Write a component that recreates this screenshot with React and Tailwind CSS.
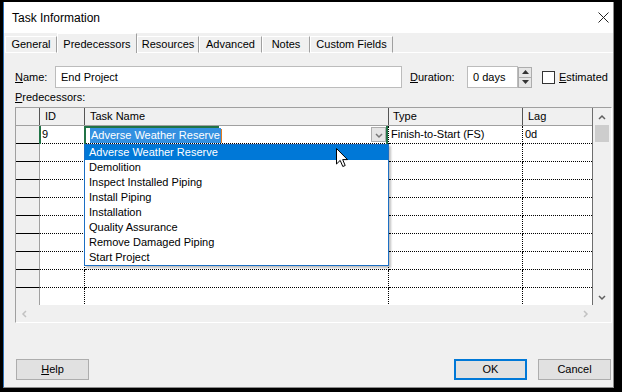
import React from 'react';

const tasks = [
  'Adverse Weather Reserve',
  'Demolition',
  'Inspect Installed Piping',
  'Install Piping',
  'Installation',
  'Quality Assurance',
  'Remove Damaged Piping',
  'Start Project',
];

const chevrons = {
  up: 'M1 6 L4 3 L7 6',
  down: 'M1 3 L4 6 L7 3',
  left: 'M5 1 L2 4 L5 7',
  right: 'M3 1 L6 4 L3 7',
};

const Chevron = ({ dir, color = '#606060' }) => (
  <svg width="8" height="8" viewBox="0 0 8 8">
    <path d={chevrons[dir]} fill="none" stroke={color} strokeWidth="1.5" />
  </svg>
);

const Tab = ({ label, width, active }) =>
  active ? (
    <div
      className="h-[20px] bg-[#f0f0f0] border-l border-t border-white border-r border-r-[#a0a0a0] flex items-start justify-center pt-[2px]"
      style={{ width }}
    >
      {label}
    </div>
  ) : (
    <div
      className="h-[17px] border-l border-t border-white border-r border-r-[#a0a0a0] border-b border-b-white flex items-center justify-center"
      style={{ width }}
    >
      {label}
    </div>
  );

const Button = ({ children, primary }) => (
  <div
    className={
      primary
        ? 'w-[73px] h-[21px] bg-[#e1e1e1] border-2 border-[#0078d7] flex items-center justify-center'
        : 'w-[73px] h-[21px] bg-[#e1e1e1] border border-[#adadad] flex items-center justify-center'
    }
  >
    {children}
  </div>
);

const cell = 'bg-white border-r border-b border-dotted border-black';

export default function App() {
  return (
    <div className="w-[622px] h-[392px] bg-black pl-[3px] pt-[2px] font-['Liberation_Sans',Arial,sans-serif] text-[11px] text-black">
      <div className="w-[611px] h-[386px] bg-[#f0f0f0] border-l border-[#2a6fb8] border-r border-r-[#8c8c8c] border-b border-b-[#8c8c8c] flex flex-col">
        {/* Title bar */}
        <div className="h-[31px] bg-white flex items-center justify-between pl-[8px] pr-[4px] text-[12px]">
          <span>Task Information</span>
          <svg width="11" height="11" viewBox="0 0 11 11">
            <path d="M0.5 0.5 L10.5 10.5 M10.5 0.5 L0.5 10.5" stroke="#222" strokeWidth="1" />
          </svg>
        </div>

        {/* Tabs */}
        <div className="h-[20px] flex items-end pl-[1px]">
          <Tab label="General" width={52} />
          <Tab label="Predecessors" width={80} active />
          <Tab label="Resources" width={62} />
          <Tab label="Advanced" width={63} />
          <Tab label="Notes" width={48} />
          <Tab label="Custom Fields" width={83} />
          <div className="flex-1 h-[1px] bg-white" />
        </div>

        {/* Panel */}
        <div className="flex-1 flex flex-col pl-[11px] pr-[1px]">
          <div className="mt-[13px] h-[22px] flex items-center">
            <span className="w-[40px]">
              <span className="underline">N</span>ame:
            </span>
            <div className="w-[347px] h-[22px] bg-white border border-[#bcbcbc] flex items-center pl-[5px]">
              End Project
            </div>
            <span className="ml-[8px] w-[57px]">
              <span className="underline">D</span>uration:
            </span>
            <div className="w-[51px] h-[22px] bg-white border border-[#bcbcbc] flex items-center pl-[5px]">
              0 days
            </div>
            <div className="w-[14px] h-[21px] flex flex-col border border-[#adadad] bg-[#e6e6e6]">
              <div className="flex-1 flex items-center justify-center border-b border-[#adadad]">
                <svg width="7" height="4" viewBox="0 0 7 4">
                  <path d="M0 4 L3.5 0 L7 4 Z" fill="#333" />
                </svg>
              </div>
              <div className="flex-1 flex items-center justify-center">
                <svg width="7" height="4" viewBox="0 0 7 4">
                  <path d="M0 0 L3.5 4 L7 0 Z" fill="#333" />
                </svg>
              </div>
            </div>
            <div className="ml-[10px] w-[13px] h-[13px] bg-white border border-[#333]" />
            <span className="ml-[4px]">
              <span className="underline">E</span>stimated
            </span>
          </div>

          <div className="h-[19px] leading-[19px]">
            <span className="underline">P</span>redecessors:
          </div>

          {/* Grid */}
          <div className="w-[597px] h-[216px] border-l border-t border-[#a0a0a0] border-r border-r-white border-b border-b-white flex flex-col">
            <div className="h-[197px] flex">
              <div className="relative w-[577px] h-[197px] overflow-hidden border-r border-[#6d6d6d]">
                <div className="grid grid-cols-[24px_45px_304px_134px_69px] h-[18px] bg-[#f0f0f0] border-b border-[#a0a0a0] leading-[17px]">
                  <div className="border-r border-[#555]" />
                  <div className="border-r border-[#555] pl-[5px]">ID</div>
                  <div className="border-r border-[#555] pl-[5px]">Task Name</div>
                  <div className="border-r border-[#555] pl-[4px]">Type</div>
                  <div className="pl-[5px]">Lag</div>
                </div>
                {Array.from({ length: 10 }).map((_, i) => (
                  <div key={i} className="grid grid-cols-[24px_45px_304px_134px_69px] h-[18px] leading-[17px]">
                    <div className="bg-[#f0f0f0] border-r border-[#a0a0a0] border-b border-b-black" />
                    <div className={`${cell} relative pl-[2px]`}>
                      {i === 0 && (
                        <>
                          <div className="absolute left-[-1px] top-0 w-[2px] h-[18px] bg-[#217346]" />
                          9
                        </>
                      )}
                    </div>
                    <div className={`${cell} relative`}>
                      {i === 0 && (
                        <>
                          <div className="absolute left-[-1px] top-0 w-[2px] h-[18px] bg-[#217346]" />
                          <div className="absolute left-0 top-0 w-[134px] h-[2px] bg-[#217346]" />
                          <div className="absolute right-0 top-0 w-[2px] h-[18px] bg-[#217346]" />
                          <div className="absolute left-[5px] top-[2px] h-[15px] flex items-center">
                            <span className="bg-[#3390e0] text-white leading-[15px] px-[1px]">Adverse Weather Reserve</span>
                            <span className="w-[1px] h-[14px] bg-[#e07b20]" />
                          </div>
                          <div className="absolute right-[2px] top-[1px] w-[15px] h-[15px] bg-[#e5e5e5] border border-[#adadad] flex items-center justify-center">
                            <Chevron dir="down" color="#777" />
                          </div>
                        </>
                      )}
                    </div>
                    <div className={`${cell} pl-[2px]`}>{i === 0 && 'Finish-to-Start (FS)'}</div>
                    <div className="bg-white border-b border-dotted border-black pl-[2px]">{i === 0 && '0d'}</div>
                  </div>
                ))}

                {/* Dropdown list */}
                <div className="absolute left-[68px] top-[36px] w-[305px] h-[122px] bg-white border border-[#1c6fc4] shadow-[2px_2px_2px_rgba(0,0,0,0.25)] flex flex-col">
                  {tasks.map((t, i) => (
                    <div
                      key={t}
                      className={
                        i === 0
                          ? 'h-[15px] leading-[15px] pl-[4px] bg-[#0078d7] text-white'
                          : 'h-[15px] leading-[15px] pl-[4px]'
                      }
                    >
                      {t}
                    </div>
                  ))}
                </div>

                {/* Mouse pointer */}
                <svg className="absolute left-[320px] top-[40px]" width="13" height="20" viewBox="0 0 13 20">
                  <path d="M0.5 0.5 L0.5 16 L4.2 12.4 L6.8 18.5 L9.2 17.5 L6.7 11.6 L11.5 11.6 Z" fill="#fff" stroke="#000" strokeWidth="1" />
                </svg>
              </div>

              {/* Vertical scrollbar */}
              <div className="w-[18px] h-[197px] bg-[#f0f0f0] flex flex-col">
                <div className="h-[17px] flex items-center justify-center">
                  <Chevron dir="up" />
                </div>
                <div className="mx-[2px] h-[17px] bg-[#cdcdcd]" />
                <div className="flex-1" />
                <div className="h-[17px] flex items-center justify-center">
                  <Chevron dir="down" />
                </div>
              </div>
            </div>

            {/* Horizontal scrollbar */}
            <div className="h-[17px] flex bg-[#f0f0f0]">
              <div className="w-[577px] flex items-center justify-between">
                <div className="w-[17px] h-[17px] flex items-center justify-center">
                  <Chevron dir="left" color="#c2c2c2" />
                </div>
                <div className="w-[17px] h-[17px] flex items-center justify-center">
                  <Chevron dir="right" color="#c2c2c2" />
                </div>
              </div>
              <div className="w-[18px]" />
            </div>
          </div>

          {/* Buttons */}
          <div className="mt-[36px] flex items-center pl-[1px] pr-[1px]">
            <Button>
              <span className="underline">H</span>elp
            </Button>
            <div className="flex-1" />
            <Button primary>OK</Button>
            <div className="w-[11px]" />
            <Button>Cancel</Button>
          </div>
        </div>
      </div>
    </div>
  );
}
